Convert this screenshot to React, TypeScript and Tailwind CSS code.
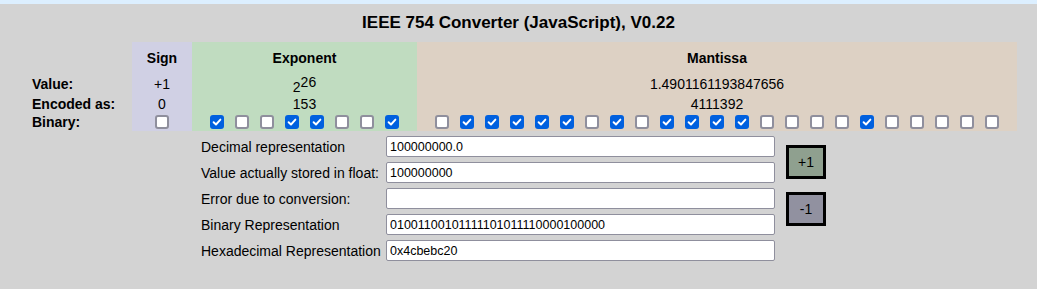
import React from "react";

const FONT = { fontFamily: "'Liberation Sans', Arial, Helvetica, sans-serif" };

const expBits = [1, 0, 0, 1, 1, 0, 0, 1];
const manBits = "01111101011110000100000".split("").map((c) => c === "1");

function Bit({ on }: { on: boolean }) {
  return (
    <div className="w-[25px] flex items-center justify-center">
      {on ? (
        <div className="w-[14px] h-[14px] rounded-[3px] bg-[#0060df] flex items-center justify-center">
          <svg width="10" height="10" viewBox="0 0 10 10" fill="none">
            <path d="M1.6 5.2 L4 7.5 L8.4 2.6" stroke="white" strokeWidth="1.9" strokeLinecap="round" strokeLinejoin="round" />
          </svg>
        </div>
      ) : (
        <div className="w-[14px] h-[14px] rounded-[3px] border-2 border-[#8f8f9d] bg-white" />
      )}
    </div>
  );
}

function Field({ label, value }: { label: string; value: string }) {
  return (
    <div className="flex items-center h-[21px]">
      <div className="w-[185px] text-[14px] leading-[16px] whitespace-nowrap">{label}</div>
      <input
        readOnly
        value={value}
        className="w-[389px] h-[21px] bg-white border border-[#8f8f9d] rounded-[2px] pl-[3px] text-[12.5px] text-black outline-none"
        style={FONT}
      />
    </div>
  );
}

export default function App() {
  return (
    <div className="w-[1037px] h-[289px] bg-[#d3d3d3] text-black overflow-hidden" style={FONT}>
      <div className="h-[4px] bg-[#dcefff]" />
      <div className="h-[38px] pt-[9px] text-center text-[17px] leading-[20px] font-bold">
        IEEE 754 Converter (JavaScript), V0.22
      </div>

      <div className="flex ml-[32px] text-[14px] leading-[16px]">
        <div className="w-[100px] flex flex-col font-bold">
          <div className="h-[32px]" />
          <div className="h-[20px] flex items-center">Value:</div>
          <div className="h-[19px] flex items-center">Encoded as:</div>
          <div className="h-[18px] flex items-center">Binary:</div>
        </div>

        <div className="w-[60px] flex flex-col bg-[#d0d0e4]">
          <div className="h-[32px] flex items-center justify-center font-bold">Sign</div>
          <div className="h-[20px] flex items-center justify-center">+1</div>
          <div className="h-[19px] flex items-center justify-center">0</div>
          <div className="h-[18px] flex items-center justify-center">
            <Bit on={false} />
          </div>
        </div>

        <div className="w-[225px] flex flex-col bg-[#c0dcc0]">
          <div className="h-[32px] flex items-center justify-center font-bold">Exponent</div>
          <div className="h-[20px] flex items-center justify-center">
            <span className="relative top-[3px]">2</span>
            <span className="relative top-[-2px]">26</span>
          </div>
          <div className="h-[19px] flex items-center justify-center">153</div>
          <div className="h-[18px] flex items-center justify-center">
            {expBits.map((b, i) => (
              <Bit key={i} on={b === 1} />
            ))}
          </div>
        </div>

        <div className="w-[600px] flex flex-col bg-[#ddd1c4]">
          <div className="h-[32px] flex items-center justify-center font-bold">Mantissa</div>
          <div className="h-[20px] flex items-center justify-center">1.4901161193847656</div>
          <div className="h-[19px] flex items-center justify-center">4111392</div>
          <div className="h-[18px] flex items-center justify-center">
            {manBits.map((b, i) => (
              <Bit key={i} on={b} />
            ))}
          </div>
        </div>
      </div>

      <div className="flex ml-[201px] mt-[5px]">
        <div className="flex flex-col gap-[5px]">
          <Field label="Decimal representation" value="100000000.0" />
          <Field label="Value actually stored in float:" value="100000000" />
          <Field label="Error due to conversion:" value="" />
          <Field label="Binary Representation" value="01001100101111101011110000100000" />
          <Field label="Hexadecimal Representation" value="0x4cbebc20" />
        </div>
        <div className="flex flex-col ml-[11px] mt-[9px] gap-[13px]">
          <div className="w-[40px] h-[34px] border-[3px] border-black bg-[#8fa08f] flex items-center justify-center text-[14px]">
            +1
          </div>
          <div className="w-[40px] h-[34px] border-[3px] border-black bg-[#9191a0] flex items-center justify-center text-[14px]">
            -1
          </div>
        </div>
      </div>
    </div>
  );
}
